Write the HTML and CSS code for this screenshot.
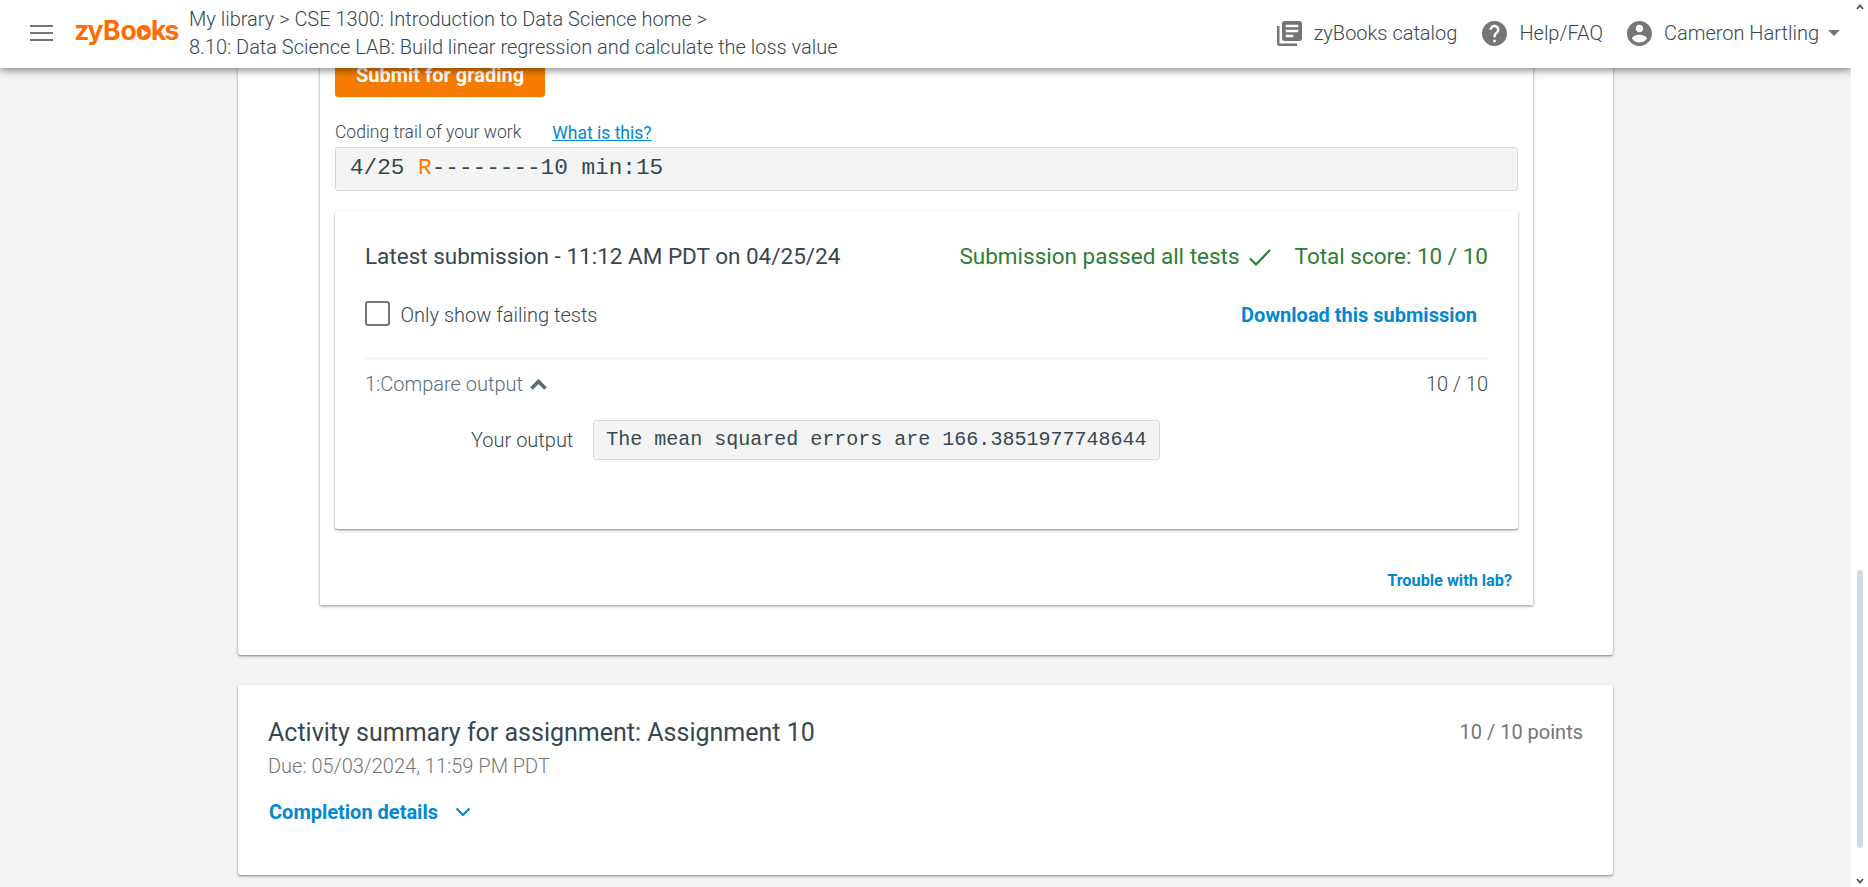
FILE: index.html
```html
<!DOCTYPE html>
<html lang="en">
<head>
<meta charset="utf-8">
<title>zyBooks - Data Science LAB</title>
<link rel="stylesheet" href="styles.css">
</head>
<body>
<div class="window">
  <div class="page">
    <header class="topbar">
      <svg class="menu" viewBox="0 0 23 16" width="23" height="16"><path d="M0 1h23M0 8h23M0 15h23" stroke="#757575" stroke-width="2" fill="none"/></svg>
      <svg class="logo" viewBox="0 0 106 34" width="106" height="34"><text x="-0.8 12.5 28 45.500 60.800 76 89.500" y="24">zyBooks</text><circle cx="69" cy="17" r="5.500" fill="#ff6c00"/><path d="M66.500 12.800l6.500 4.200-6.500 4.200z" fill="#fff"/></svg>
      <nav class="crumbs"><span class="c1">My library &gt; CSE 1300: Introduction to Data Science home &gt;</span><span class="c2">8.10: Data Science LAB: Build linear regression and calculate the loss value</span></nav>
      <div class="tools">
        <svg class="ico-lib" viewBox="2 2 20 20" width="25" height="25"><path d="M4 6H2v14c0 1.1.9 2 2 2h14v-2H4V6zm16-4H8c-1.1 0-2 .9-2 2v12c0 1.1.9 2 2 2h12c1.1 0 2-.9 2-2V4c0-1.1-.9-2-2-2zm-1 9H9V9h10v2zm-4 4H9v-2h6v2zm4-8H9V5h10v2z"/></svg>
        <span class="t1">zyBooks catalog</span>
        <svg class="ico-help" viewBox="2 2 20 20" width="25" height="25"><path d="M12 2C6.48 2 2 6.48 2 12s4.48 10 10 10 10-4.480 10-10S17.520 2 12 2zm1 17h-2v-2h2v2zm2.070-7.750l-.9.920C13.450 12.900 13 13.500 13 15h-2v-.5c0-1.100.45-2.100 1.170-2.830l1.240-1.260c.37-.36.59-.86.59-1.410 0-1.100-.9-2-2-2s-2 .9-2 2H8c0-2.210 1.790-4 4-4s4 1.790 4 4c0 .88-.36 1.680-.93 2.250z"/></svg>
        <span class="t2">Help/FAQ</span>
        <svg class="ico-user" viewBox="2 2 20 20" width="25" height="25"><path d="M12 2C6.480 2 2 6.480 2 12s4.480 10 10 10 10-4.480 10-10S17.520 2 12 2zm0 3c1.660 0 3 1.340 3 3s-1.340 3-3 3-3-1.340-3-3 1.340-3 3-3zm0 14.200c-2.500 0-4.710-1.280-6-3.220.03-1.990 4-3.080 6-3.080 1.990 0 5.970 1.090 6 3.080-1.290 1.940-3.500 3.220-6 3.220z"/></svg>
        <span class="t3">Cameron Hartling</span>
        <svg class="ico-drop" viewBox="0 0 12 6" width="12" height="6"><path d="M0 0h12L6 6z"/></svg>
      </div>
    </header>
    <main class="content">
      <section class="card lab">
        <div class="zylab">
          <button class="submit"><span>Submit for grading</span></button>
          <div class="trail-head"><span class="trail-label">Coding trail of your work</span><a class="what">What is this?</a></div>
          <div class="trail">4/25 <span class="run">R</span>--------10 min:15</div>
          <div class="card submission">
            <div class="row title-row"><span class="latest">Latest submission - 11:12 AM PDT on 04/25/24</span>
              <span class="result"><span class="passed">Submission passed all tests</span><svg viewBox="0 0 22 17" width="22" height="17"><path d="M1 9.500l6 6L21 1" fill="none" stroke="#2e7d32" stroke-width="2.200"/></svg><span class="score">Total score: 10 / 10</span></span></div>
            <div class="row filter-row"><span class="filter"><i class="box"></i><span class="only">Only show failing tests</span></span><a class="download">Download this submission</a></div>
            <div class="row test-row"><span class="test"><span class="cmp">1:Compare output</span><svg viewBox="0 0 17 11" width="17" height="11"><path d="M1.500 9.500l7-7 7 7" fill="none" stroke="#546e7a" stroke-width="3.600"/></svg></span><span class="pts">10 / 10</span></div>
            <div class="output"><span class="your">Your output</span><code class="out"><span>The mean squared errors are 166.3851977748644</span></code></div>
          </div>
          <a class="trouble">Trouble with lab?</a>
        </div>
      </section>
      <section class="card summary">
        <div class="row"><span class="activity">Activity summary for assignment: Assignment 10</span><span class="points">10 / 10 points</span></div>
        <div class="due"><span>Due: 05/03/2024, 11:59 PM PDT</span></div>
        <a class="completion"><span>Completion details</span><svg viewBox="0 0 16 10" width="16" height="10"><path d="M1.500 1.500L8 8l6.500-6.500" fill="none" stroke="#0288d1" stroke-width="2.200"/></svg></a>
      </section>
    </main>
  </div>
  <div class="scrollbar">
    <svg viewBox="0 0 8 6" width="8" height="6"><path d="M1 5l3-3.500L7 5" fill="none" stroke="#505050" stroke-width="1.800"/></svg>
    <div class="thumb"></div>
    <svg class="down" viewBox="0 0 8 6" width="8" height="6"><path d="M1 1l3 3.500L7 1" fill="none" stroke="#505050" stroke-width="1.800"/></svg>
  </div>
</div>
</body>
</html>
```
FILE: styles.css
```css
* { box-sizing: border-box; }
body { margin: 0; font-family: Roboto, "Liberation Sans", sans-serif; font-size: 20px; font-weight: 300; line-height: 28px; color: #37474f; overflow: hidden; }
.window { display: flex; width: 1868px; height: 887px; }
.page { width: 1851px; height: 887px; background: #f4f4f4; overflow: hidden; display: flex; flex-direction: column; }
.topbar { flex: none; height: 68px; background: #fff; display: flex; align-items: center; padding: 0 11px 2px 29.500px; box-shadow: 0 2px 8px rgba(0,0,0,.5); z-index: 2; position: relative; white-space: nowrap; }
.logo { margin-left: 22.500px; overflow: visible; }
.logo text { font: 700 26.500px Inter, sans-serif; fill: #ff6c00; }
.crumbs { display: flex; flex-direction: column; align-items: flex-start; margin-left: 8px; }
.c2 { letter-spacing: -0.015px; }
.tools { margin-left: auto; display: flex; align-items: center; }
.tools svg { fill: #757575; }
.ico-lib, .ico-help, .ico-user { margin-right: 12px; }
.t1 { margin-right: 25px; }
.t2 { margin-right: 24px; }
.ico-drop { margin-left: 9px; }
.content { padding-left: 238px; margin-top: -12px; }
.card { background: #fff; border-radius: 3px; box-shadow: 0 1px 2px rgba(0,0,0,.38), 0 2px 4px rgba(0,0,0,.12); }
.lab { width: 1375px; height: 599px; padding-left: 82px; }
.zylab { width: 1213px; height: 549px; padding: 0 15px; display: flex; flex-direction: column; background: #fff; box-shadow: 0 1px 3px rgba(0,0,0,.45); }
.submit { width: 210px; height: 41px; border: 0; border-radius: 3px; background: #f57c00; color: #fff; font: 700 20px/36px Roboto, sans-serif; padding: 0 0 3px; }
.trail-head { display: flex; align-items: center; font-size: 17.5px; height: 28px; margin-top: 21px; }
.what { font-weight: 400; color: #0288d1; text-decoration: underline; margin-left: 31px; position: relative; top: 1px; }
.trail { margin-top: 1px; height: 44px; border: 1px solid #d8d8d8; border-radius: 3px; background: #f4f4f4; font: 22.7px/41px "Liberation Mono", monospace; padding-left: 14px; white-space: pre; }
.run { color: #f57c00; }
.submission { margin-top: 20px; height: 318px; padding: 31px 30px 0; }
.row { display: flex; justify-content: space-between; white-space: nowrap; }
.title-row { font-size: 22.5px; font-weight: 400; }
.result { color: #2e7d32; display: flex; align-items: center; }
.result svg { margin: 3px 24px 0 9px; }
.filter-row { margin-top: 31px; align-items: center; }
.filter { display: flex; align-items: center; }
.box { width: 25px; height: 25px; border: 2px solid #757575; border-radius: 3px; margin: 0 10.500px 3px 0; }
.download, .completion { font-weight: 700; color: #0288d1; }
.download { margin-right: 11px; }
.test-row { border-top: 1px solid #ececec; margin-top: 29px; padding-top: 11px; }
.test { color: #546e7a; display: flex; align-items: center; }
.test svg { margin-left: 7px; }
.pts { color: #424c51; }
.output { display: flex; align-items: center; margin: 22px 0 0 106px; white-space: nowrap; }
.out { margin-left: 20px; height: 40px; width: 567px; border: 1px solid #d8d8d8; border-radius: 3px; background: #f4f4f4; padding-left: 12px; font: 20px/37px "Liberation Mono", monospace; white-space: pre; }
.trouble { font-size: 16.25px; font-weight: 700; color: #0288d1; align-self: flex-end; margin: 38px 6px 0 0; }
.summary { width: 1375px; height: 190px; margin-top: 30px; padding: 33px 30px 0; }
.activity { font-size: 25px; font-weight: 400; padding-top: 1px; }
.points { font-weight: 400; color: #757575; }
.due { color: #757575; margin-top: 5px; }
.completion { display: inline-flex; align-items: center; margin: 18px 0 0 1px; }
.completion svg { margin-left: 17px; }
.scrollbar { width: 17px; background: #fff; display: flex; flex-direction: column; align-items: center; padding: 4px 0 3px 1px; }
.thumb { width: 6px; height: 278px; border-radius: 3px; background: #cfdce6; margin-top: 560px; }
.down { margin-top: auto; }
```
